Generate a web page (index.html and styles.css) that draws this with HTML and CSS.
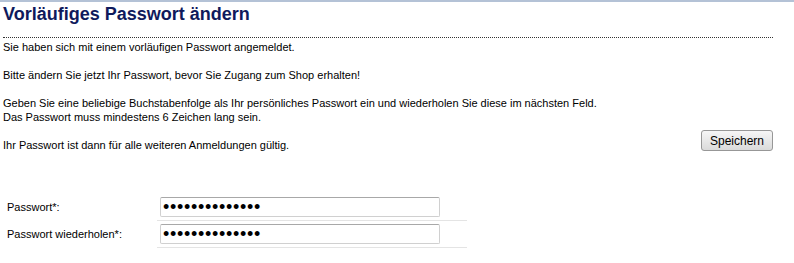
FILE: index.html
```html
<!DOCTYPE html>
<html lang="de">
<head>
  <meta charset="UTF-8" />
  <title>Vorläufiges Passwort ändern</title>
  <link rel="stylesheet" href="styles.css">
</head>
<body>
  <div class="page">
    <h1 class="title">Vorläufiges Passwort ändern</h1>

    <div class="intro">
      <div class="intro-text">
        <p>Sie haben sich mit einem vorläufigen Passwort angemeldet.</p>
        <p>Bitte ändern Sie jetzt Ihr Passwort, bevor Sie Zugang zum Shop erhalten!</p>
        <p>Geben Sie eine beliebige Buchstabenfolge als Ihr persönliches Passwort ein und wiederholen Sie diese im nächsten Feld.<br>
        Das Passwort muss mindestens 6 Zeichen lang sein.</p>
        <p>Ihr Passwort ist dann für alle weiteren Anmeldungen gültig.</p>
      </div>
      <button type="submit" class="btn-save">Speichern</button>
    </div>

    <table class="pw-form">
      <tr>
        <td class="label"><label for="pw1">Passwort*:</label></td>
        <td class="field"><input type="password" id="pw1" value="geheim12345678"></td>
      </tr>
      <tr>
        <td class="label"><label for="pw2">Passwort wiederholen*:</label></td>
        <td class="field"><input type="password" id="pw2" value="geheim12345678"></td>
      </tr>
    </table>
  </div>
</body>
</html>
```

FILE: styles.css
```css
:root {
  --title: #0f1a5c;
  --rule: #b4c2d6;
  --line: #e4e4e4;
}

* {
  box-sizing: border-box;
}

body {
  margin: 0;
  padding: 0;
  font-family: 'Liberation Sans', Arial, sans-serif;
  font-size: 11px;
  color: #000;
  background: #fff;
  border-top: 2px solid var(--rule);
}

.page {
  width: 773px;
  padding-left: 3px;
}

.title {
  margin: 0;
  padding-top: 1px;
  height: 36px;
  font-size: 18px;
  line-height: 22px;
  font-weight: 700;
  color: var(--title);
  border-bottom: 1px dotted #333;
}

.intro {
  display: flex;
  align-items: flex-end;
  justify-content: space-between;
  padding-top: 2px;
}

.intro-text p {
  margin: 0 0 14px;
  line-height: 14px;
}

.intro-text p:last-child {
  margin-bottom: 0;
}

.btn-save {
  width: 72px;
  height: 21px;
  margin-bottom: 1px;
  padding: 0;
  font-family: 'Liberation Sans', Arial, sans-serif;
  font-size: 12px;
  color: #000;
  background: linear-gradient(to bottom, #f6f6f6, #e8e8e8 50%, #dadada);
  border: 1px solid #979797;
  border-radius: 3px;
  cursor: pointer;
}

.pw-form {
  margin-top: 42px;
  border-collapse: collapse;
}

.pw-form td {
  padding: 3px 0 3px 0;
}

.pw-form .label {
  width: 154px;
  padding-left: 4px;
}

.pw-form .field {
  width: 310px;
  padding-left: 3px;
  border-bottom: 1px solid var(--line);
}

.pw-form input {
  display: block;
  width: 280px;
  height: 20px;
  padding: 0 2px;
  font-family: 'Liberation Sans', Arial, sans-serif;
  font-size: 18px;
  letter-spacing: 0.7px;
  line-height: 18px;
  color: #000;
  border: 1px solid #d0d0d0;
  border-top-color: #a8a8a8;
  border-radius: 2px;
  outline: none;
}
```
